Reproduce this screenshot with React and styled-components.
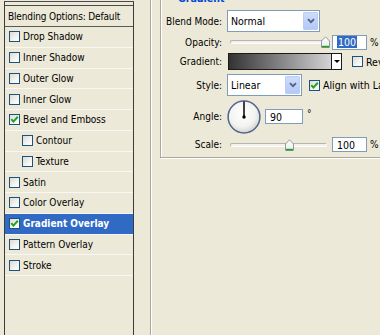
import React from 'react';
import styled, { createGlobalStyle } from 'styled-components';

const GlobalStyle = createGlobalStyle`
  html, body {
    margin: 0;
    padding: 0;
    background: #ECE9D8;
  }
  body {
    font-family: "DejaVu Sans Condensed", "Liberation Sans", sans-serif;
    font-size: 10px;
    color: #000;
  }
`;

const Window = styled.div`
  display: flex;
  width: 380px;
  height: 335px;
  overflow: hidden;
  background: #ECE9D8;
`;

const StylePane = styled.div`
  width: 134px;
  flex-shrink: 0;
  padding: 1px 0 0 4px;
  box-sizing: border-box;
`;

const StyleList = styled.div`
  height: 100%;
  border-left: 1px solid #3c3c3c;
  border-right: 1px solid #3c3c3c;
`;

const TopStrip = styled.div`
  height: 3px;
  border-top: 1px solid #4a4a4a;
  border-bottom: 1px solid #4a4a4a;
`;

const Header = styled.div`
  height: 21px;
  box-sizing: border-box;
  display: flex;
  align-items: center;
  padding-left: 3px;
  border-bottom: 1px solid #5a5a52;
  white-space: nowrap;
  letter-spacing: -0.15px;
`;

const Item = styled.div`
  height: 20.75px;
  box-sizing: border-box;
  display: flex;
  align-items: center;
  gap: 3px;
  padding-left: ${(p) => (p.$indent ? '17px' : '4px')};
  border-bottom: 1px solid #F8F7F1;
  white-space: nowrap;
  background: ${(p) => (p.$selected ? '#316AC5' : 'transparent')};
  color: ${(p) => (p.$selected ? '#fff' : '#000')};
  font-weight: ${(p) => (p.$selected ? 'bold' : 'normal')};
`;

const Box = styled.span`
  width: 11px;
  height: 11px;
  box-sizing: border-box;
  flex-shrink: 0;
  border: 1px solid #1C5180;
  background: linear-gradient(135deg, #DCDCD5 0%, #F4F4F0 60%, #FFFFFF 100%);
  display: flex;
  align-items: center;
  justify-content: center;
`;

const Check = ({ checked }) => (
  <Box>
    {checked && (
      <svg width="9" height="9" viewBox="0 0 9 9">
        <path d="M1.3 4.2 L3.4 6.6 L7.8 1.8" fill="none" stroke="#21A121" strokeWidth="2" />
      </svg>
    )}
  </Box>
);

const SettingsPane = styled.div`
  margin-left: 16px;
  padding-left: 9px;
  border-left: 1px solid #ACA899;
  box-shadow: inset 1px 0 0 #fff;
  flex-shrink: 0;
`;

const GroupBox = styled.div`
  position: relative;
  margin-top: -4px;
  width: 260px;
  padding: 13px 0 4px 1px;
  border: 1px solid #ACA899;
  box-shadow: 1px 1px 0 #fff, inset 1px 1px 0 #fff;
  display: grid;
  grid-template-columns: 60px 1fr;
  grid-template-rows: 22px 16px 19px 24px 35px 17px;
  column-gap: 5px;
  row-gap: 2px;
`;

const Legend = styled.span`
  position: absolute;
  top: -5px;
  left: 15px;
  padding: 0 2px;
  line-height: 12px;
  background: #ECE9D8;
  color: #0046D5;
  font-weight: bold;
  font-size: 10.5px;
`;

const Label = styled.label`
  display: flex;
  align-items: center;
  justify-content: flex-end;
  white-space: nowrap;
`;

const Controls = styled.div`
  display: flex;
  align-items: center;
  gap: ${(p) => p.$gap || 5}px;
  white-space: nowrap;
`;

const Select = styled.div`
  width: ${(p) => p.$width}px;
  height: 22px;
  box-sizing: border-box;
  border: 1px solid #7F9DB9;
  background: #fff;
  display: flex;
  align-items: center;
  padding: 1px;
`;

const SelectText = styled.span`
  flex: 1;
  padding-left: 2px;
  font-size: 10.5px;
`;

const DropButton = styled.span`
  width: 15px;
  height: 18px;
  box-sizing: border-box;
  border: 1px solid #BCCCF4;
  border-radius: 1px;
  background: linear-gradient(#CEDBFB, #B4C8F6);
  display: flex;
  align-items: center;
  justify-content: center;
`;

const Chevron = () => (
  <svg width="8" height="6" viewBox="0 0 8 6">
    <path d="M1 1.2 L4 4.2 L7 1.2" fill="none" stroke="#4D6185" strokeWidth="1.8" />
  </svg>
);

const Slider = styled.div`
  position: relative;
  width: 97px;
  height: 16px;
  margin-left: 3px;
  display: flex;
  align-items: center;
`;

const Track = styled.div`
  width: 100%;
  height: 4px;
  box-sizing: border-box;
  border: 1px solid #B5B4AE;
  border-bottom-color: #fff;
  border-right-color: #fff;
  border-radius: 2px;
  background: #F2F1EB;
`;

const ThumbWrap = styled.span`
  position: absolute;
  top: 2px;
  display: flex;
`;

const Thumb = ({ left }) => (
  <ThumbWrap style={{ left }}>
    <svg width="9" height="12" viewBox="0 0 9 12">
      <defs>
        <linearGradient id="thumbFill" x1="0" y1="0" x2="0" y2="1">
          <stop offset="0" stopColor="#ffffff" />
          <stop offset="1" stopColor="#ECEBE6" />
        </linearGradient>
      </defs>
      <path d="M0.5 11.5 V5 L4.5 0.8 L8.5 5 V11.5 Z" fill="url(#thumbFill)" stroke="#8E9BA6" />
      <path d="M1 10.6 H8" stroke="#21A121" strokeWidth="1.6" />
    </svg>
  </ThumbWrap>
);

const TextInput = styled.div`
  width: ${(p) => p.$width}px;
  height: 15px;
  box-sizing: border-box;
  border: 1px solid #7F9DB9;
  background: #fff;
  display: flex;
  align-items: center;
  padding-left: 4px;
  font-size: 10.5px;
`;

const Selection = styled.span`
  background: #316AC5;
  color: #fff;
  padding: 0 1px;
`;

const Unit = styled.span`
  align-self: ${(p) => (p.$top ? 'flex-start' : 'center')};
  margin-top: ${(p) => (p.$top ? '9px' : '0')};
`;

const GradientBar = styled.div`
  width: 114px;
  height: 17px;
  margin-left: 1px;
  box-sizing: border-box;
  border: 1px solid #1a1a1a;
  display: flex;
`;

const Ramp = styled.div`
  flex: 1;
  background: linear-gradient(to right, #333333, #D4D4D4);
`;

const RampArrow = styled.div`
  width: 9px;
  border-left: 1px solid #1a1a1a;
  background: #fff;
  display: flex;
  align-items: center;
  justify-content: center;
  &::after {
    content: '';
    border-left: 3px solid transparent;
    border-right: 3px solid transparent;
    border-top: 3px solid #000;
  }
`;

const CheckLabel = styled.span`
  display: flex;
  align-items: center;
  gap: 3px;
  margin-left: ${(p) => p.$offset}px;
  font-size: 10.5px;
`;

const Dial = () => (
  <svg width="34" height="34" viewBox="0 0 34 34">
    <defs>
      <radialGradient id="dialFill" cx="45%" cy="40%" r="62%">
        <stop offset="0" stopColor="#ffffff" />
        <stop offset="0.65" stopColor="#F3F3F0" />
        <stop offset="1" stopColor="#D2D2CC" />
      </radialGradient>
    </defs>
    <circle cx="17" cy="17" r="15.9" fill="url(#dialFill)" stroke="#51648F" strokeWidth="1.5" />
    <line x1="17" y1="17" x2="17" y2="1.5" stroke="#000" strokeWidth="1.5" />
    <circle cx="17" cy="17" r="1.7" fill="#000" />
  </svg>
);

const effects = [
  { name: 'Drop Shadow' },
  { name: 'Inner Shadow' },
  { name: 'Outer Glow' },
  { name: 'Inner Glow' },
  { name: 'Bevel and Emboss', checked: true },
  { name: 'Contour', indent: true },
  { name: 'Texture', indent: true },
  { name: 'Satin' },
  { name: 'Color Overlay' },
  { name: 'Gradient Overlay', checked: true, selected: true },
  { name: 'Pattern Overlay' },
  { name: 'Stroke' },
];

export default function App() {
  return (
    <Window>
      <GlobalStyle />
      <StylePane>
        <StyleList>
          <TopStrip />
          <Header>Blending Options: Default</Header>
          {effects.map((e) => (
            <Item key={e.name} $indent={e.indent} $selected={e.selected}>
              <Check checked={e.checked} />
              {e.name}
            </Item>
          ))}
        </StyleList>
      </StylePane>

      <SettingsPane>
        <GroupBox>
          <Legend>Gradient</Legend>

          <Label>Blend Mode:</Label>
          <Controls>
            <Select $width={93}>
              <SelectText>Normal</SelectText>
              <DropButton><Chevron /></DropButton>
            </Select>
          </Controls>

          <Label>Opacity:</Label>
          <Controls $gap={3}>
            <Slider>
              <Track />
              <Thumb left="91px" />
            </Slider>
            <TextInput $width={35} style={{ marginLeft: 2 }}>
              <Selection>100</Selection>
            </TextInput>
            <Unit>%</Unit>
          </Controls>

          <Label>Gradient:</Label>
          <Controls>
            <GradientBar>
              <Ramp />
              <RampArrow />
            </GradientBar>
            <CheckLabel $offset={5}>
              <Check />
              Reverse
            </CheckLabel>
          </Controls>

          <Label>Style:</Label>
          <Controls>
            <Select $width={75}>
              <SelectText>Linear</SelectText>
              <DropButton><Chevron /></DropButton>
            </Select>
            <CheckLabel $offset={2}>
              <Check checked />
              Align with Layer
            </CheckLabel>
          </Controls>

          <Label>Angle:</Label>
          <Controls $gap={4}>
            <Dial />
            <TextInput $width={38}>90</TextInput>
            <Unit $top>°</Unit>
          </Controls>

          <Label>Scale:</Label>
          <Controls $gap={3}>
            <Slider>
              <Track />
              <Thumb left="55px" />
            </Slider>
            <TextInput $width={35} style={{ marginLeft: 2 }}>100</TextInput>
            <Unit>%</Unit>
          </Controls>
        </GroupBox>
      </SettingsPane>
    </Window>
  );
}
